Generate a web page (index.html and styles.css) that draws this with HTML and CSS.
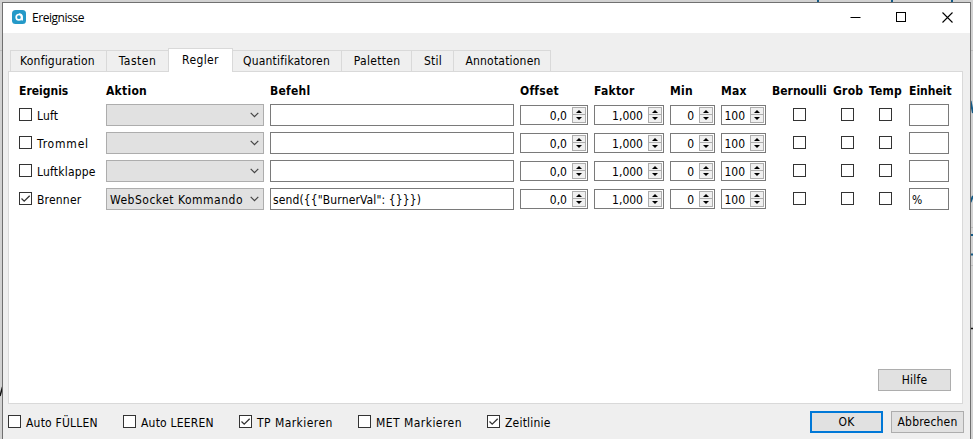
FILE: index.html
```
<!DOCTYPE html>
<html lang="de">
<head>
<meta charset="utf-8">
<title>Ereignisse</title>
<link rel="stylesheet" href="styles.css">
</head>
<body>
<svg class="backdrop" width="973" height="439" viewBox="0 0 973 439" aria-hidden="true">
  <path d="M0 50.500h2M971 50.500h2M971 227.500h2M971 265.500h2" stroke="#bdbdbd"/>
  <path d="M818 0v2M892 0v2M952 0v2" stroke="#145a86" stroke-width="2"/>
  <path d="M970.500 101l2.500 12M970.500 202l2.500-6M970 235h3M970 254.500h3" stroke="#145a86" stroke-width="2"/>
  <path d="M970 328.500h3M0 396l2.500-9" stroke="#111" stroke-width="1.500" fill="none"/>
</svg>
<main class="window">
  <header class="titlebar">
    <svg class="logo" width="14" height="14" viewBox="0 0 14 14"><rect width="14" height="14" rx="3.500" fill="#2499c8"/><circle cx="6.900" cy="7.200" r="2.700" fill="none" stroke="#fff" stroke-width="1.700"/><path d="M6.900 3.900c2 0 3.300 1.300 3.300 3.300v3.400" fill="none" stroke="#fff" stroke-width="1.500"/></svg>
    <h1>Ereignisse</h1>
    <div class="controls">
      <svg width="11" height="11"><path d="M.5 5.500h10" stroke="#000"/></svg>
      <svg width="11" height="11"><rect x=".5" y=".5" width="9" height="9" fill="none" stroke="#000"/></svg>
      <svg width="11" height="11"><path d="M.5.5l10 10M10.500.5l-10 10" stroke="#000" stroke-width="1.100"/></svg>
    </div>
  </header>
  <nav class="tabs">
    <span class="tab konfiguration">Konfiguration</span>
    <span class="tab tasten">Tasten</span>
    <span class="tab regler active">Regler</span>
    <span class="tab quantifikatoren">Quantifikatoren</span>
    <span class="tab paletten">Paletten</span>
    <span class="tab stil">Stil</span>
    <span class="tab annotationen">Annotationen</span>
  </nav>
  <section class="panel">
    <div class="sliders" id="sliders">
      <b class="tight">Ereignis</b><b>Aktion</b><b>Befehl</b><b>Offset</b><b>Faktor</b><b>Min</b><b>Max</b><b class="tight">Bernoulli</b><b>Grob</b><b>Temp</b><b class="tight">Einheit</b>
    </div>
    <button class="button help">Hilfe</button>
  </section>
  <footer class="footer">
    <label class="option fill"><i class="box"></i><span>Auto FÜLLEN</span></label>
    <label class="option empty"><i class="box"></i><span>Auto LEEREN</span></label>
    <label class="option tp"><i class="box checked"></i><span>TP Markieren</span></label>
    <label class="option met"><i class="box"></i><span>MET Markieren</span></label>
    <label class="option timeline"><i class="box checked"></i><span>Zeitlinie</span></label>
    <div class="actions"><button class="button primary">OK</button><button class="button">Abbrechen</button></div>
  </footer>
</main>
<script src="script.js"></script>
</body>
</html>
```
FILE: script.js
```
const events = [
  { name: "Luft", checked: false, action: "", command: "", unit: "" },
  { name: "Trommel", checked: false, action: "", command: "", unit: "", wide: true },
  { name: "Luftklappe", checked: false, action: "", command: "", unit: "" },
  { name: "Brenner", checked: true, action: "WebSocket Kommando", command: 'send({{"BurnerVal": {}}})', unit: "%" }
];

const tick = '<svg width="11" height="11"><path d="M1.500 5.500l2.700 2.700L9.700 2.700" fill="none" stroke="#333" stroke-width="1.300"/></svg>';
const chevron = '<svg width="9" height="6"><path d="M.7.8l3.800 3.800L8.300.8" fill="none" stroke="#444" stroke-width="1.200"/></svg>';
const up = '<svg width="6" height="3"><path d="M0 3h6L3 0z"/></svg>';
const down = '<svg width="6" height="3"><path d="M0 0h6L3 3z"/></svg>';

const box = (checked) => `<i class="box${checked ? " checked" : ""}"></i>`;
const spin = (value) => `<div class="spin"><span>${value}</span><div class="steps"><i>${up}</i><i>${down}</i></div></div>`;

document.getElementById("sliders").insertAdjacentHTML("beforeend", events.map((e) => `
  <label class="option${e.wide ? " wide" : ""}">${box(e.checked)}<span>${e.name}</span></label>
  <div class="combo"><span>${e.action}</span>${chevron}</div>
  <div class="field"><span>${e.command}</span></div>
  ${spin("0,0")}${spin("1,000")}${spin("0")}${spin("100")}
  <div class="center">${box(false)}</div><div class="center">${box(false)}</div><div class="center">${box(false)}</div>
  <div class="field"><span>${e.unit}</span></div>`).join(""));

document.querySelectorAll(".box.checked").forEach((el) => { el.innerHTML = tick; });
```
FILE: styles.css
```
* { box-sizing: border-box; }
body {
  margin: 0;
  width: 973px;
  height: 439px;
  overflow: hidden;
  background: #d2d2d2;
  color: #000;
  font: 12px/16px "DejaVu Sans Condensed", "DejaVu Sans", sans-serif;
  font-stretch: condensed;
  letter-spacing: .2px;
}
svg { display: block; flex: none; }
.backdrop { position: absolute; left: 0; top: 0; }
.window {
  position: relative;
  width: 969px;
  height: 440px;
  margin: 2px 0 0 2px;
  border: 1px solid #707070;
  border-bottom: 0;
  background: #efefef;
}
.titlebar { display: flex; align-items: center; height: 30px; padding: 0 17px 2px 9px; background: #fff; }
.titlebar h1 { margin: 1px 0 0 6px; font: 12px/16px "Open Sans", sans-serif; letter-spacing: -.45px; }
.controls { display: flex; gap: 35px; margin: 1px 0 0 auto; }
.tabs { display: flex; align-items: flex-end; height: 38px; padding-left: 7px; }
.tab {
  height: 21px;
  margin-right: -1px;
  border: 1px solid #d9d9d9;
  border-bottom: 0;
  line-height: 21px;
  text-align: center;
  white-space: nowrap;
}
.active { position: relative; height: 24px; margin-bottom: -1px; background: #fff; line-height: 23px; }
.konfiguration { width: 97px; padding-right: 2px; }
.tasten { width: 63px; letter-spacing: .5px; }
.regler { width: 65px; letter-spacing: .4px; }
.quantifikatoren { width: 110px; padding-right: 1px; }
.paletten { width: 71px; padding-left: 1px; letter-spacing: .3px; }
.stil { width: 43px; padding-left: 1px; }
.annotationen { width: 98px; padding-left: 2px; }
.panel {
  display: flex;
  flex-direction: column;
  justify-content: space-between;
  width: 955px;
  height: 333px;
  margin-left: 5px;
  padding: 10px 11px 12px 10px;
  border: 1px solid #d9d9d9;
  background: #fff;
}
.sliders {
  display: grid;
  grid-template-columns: 81px 158px 244px 68px 70px 45px 45px 55px 30px 34px 40px;
  grid-template-rows: 16px repeat(4, 22px);
  gap: 6px;
  align-items: center;
  white-space: nowrap;
}
.sliders b { position: relative; top: 1px; letter-spacing: .25px; }
.sliders .tight { letter-spacing: 0; }
.option { display: flex; align-items: center; gap: 5px; white-space: nowrap; }
.option span { position: relative; top: 1px; }
.wide { letter-spacing: .8px; }
.box { display: block; flex: none; width: 13px; height: 13px; border: 1px solid #333; background: #fff; }
.sliders .box { margin-bottom: 1px; }
.center { display: flex; justify-content: center; }
.center .box { margin-right: 1px; }
.combo { display: flex; align-items: center; justify-content: space-between; height: 22px; padding: 0 4px 0 3px; border: 1px solid #adadad; background: #e1e1e1; letter-spacing: .5px; }
.combo span { position: relative; top: 1px; }
.field { height: 22px; padding: 3px 2px; border: 1px solid #7a7a7a; background: #fff; letter-spacing: .12px; }
.spin { display: flex; align-items: center; justify-content: flex-end; height: 20px; padding-right: 1px; border: 1px solid #7a7a7a; letter-spacing: 0; }
.spin > span { margin: 1px 5px 0 0; }
.steps { display: grid; width: 14px; height: 16px; grid-template-rows: 8px 8px; }
.steps i { display: grid; place-items: center; border: 1px solid #adadad; background: #f0f0f0; }
.steps i + i { border-top: 0; }
.button { width: 73px; height: 22px; padding: 0; border: 1px solid #adadad; background: #e1e1e1; color: #000; font: inherit; letter-spacing: .2px; }
.help { align-self: flex-end; }
.primary { border: 2px solid #0078d7; }
.footer { display: flex; align-items: center; height: 35px; padding: 0 6px 0 5px; }
.fill { width: 115px; }
.empty { width: 116px; }
.tp { width: 119px; letter-spacing: .45px; }
.met { width: 129px; letter-spacing: .45px; }
.actions { display: flex; gap: 8px; margin-left: auto; }
```
